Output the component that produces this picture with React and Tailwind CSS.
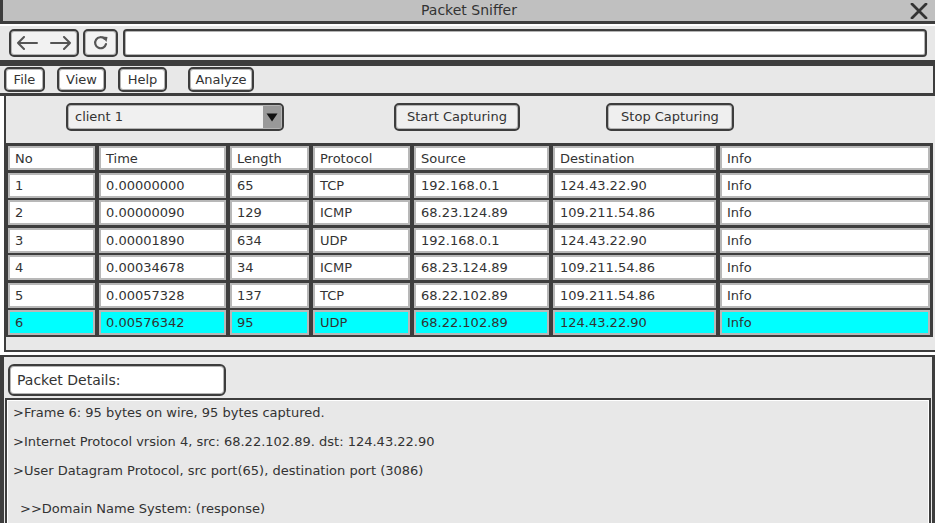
import React from "react";

const cols = [87, 127, 79, 97, 135, 163, 210];
const header = ["No", "Time", "Length", "Protocol", "Source", "Destination", "Info"];
const rows = [
  ["1", "0.00000000", "65", "TCP", "192.168.0.1", "124.43.22.90", "Info"],
  ["2", "0.00000090", "129", "ICMP", "68.23.124.89", "109.211.54.86", "Info"],
  ["3", "0.00001890", "634", "UDP", "192.168.0.1", "124.43.22.90", "Info"],
  ["4", "0.00034678", "34", "ICMP", "68.23.124.89", "109.211.54.86", "Info"],
  ["5", "0.00057328", "137", "TCP", "68.22.102.89", "109.211.54.86", "Info"],
  ["6", "0.00576342", "95", "UDP", "68.22.102.89", "124.43.22.90", "Info"],
];

function Btn({ className = "", children }) {
  return (
    <div
      className={
        "flex items-center justify-center rounded-[5px] border-2 border-[#3d3d3d] shadow-[inset_0_0_0_1px_#b4b4b4] " +
        className
      }
    >
      {children}
    </div>
  );
}

function Row({ cells, hl, h }) {
  return (
    <div className="flex gap-[4px]">
      {cells.map((c, i) => (
        <div
          key={i}
          style={{ width: cols[i] }}
          className={
            "flex shrink-0 items-center border-2 border-[#b8b8b8] px-[5px] text-[13px] leading-none " +
            (hl ? "bg-[#00ffff] " : "bg-white ") +
            (h ? "h-[24px]" : "h-[25px]")
          }
        >
          {c}
        </div>
      ))}
    </div>
  );
}

export default function App() {
  return (
    <div
      className="relative h-[523px] w-[935px] overflow-hidden bg-white text-[#333]"
      style={{ fontFamily: '"DejaVu Sans", "Noto Sans", sans-serif' }}
    >
      {/* Title bar */}
      <div className="relative flex h-[21px] items-center justify-center border-l-[3px] border-[#3d3d3d] bg-[#c0c0c0] text-[14px]">
        <span>Packet Sniffer</span>
        <svg className="absolute right-[7px] top-[3px]" width="18" height="16" viewBox="0 0 18 16">
          <path d="M2 1 L16 15 M16 1 L2 15" stroke="#333" strokeWidth="2.8" strokeLinecap="round" />
        </svg>
      </div>
      <div className="h-[3px] bg-[#3d3d3d]" />

      {/* Toolbar */}
      <div className="flex h-[36px] items-start gap-[4px] border-t-2 border-white bg-[#e8e8e8] pl-[9px] pr-[8px] pt-[3px]">
        <Btn className="h-[28px] w-[70px] gap-[12px] bg-[#f2f2f2]">
          <svg width="22" height="14" viewBox="0 0 22 14">
            <path d="M21 7 H2 M8 1 L2 7 L8 13" fill="none" stroke="#555" strokeWidth="2" strokeLinecap="round" strokeLinejoin="round" />
          </svg>
          <svg width="22" height="14" viewBox="0 0 22 14">
            <path d="M1 7 H20 M14 1 L20 7 L14 13" fill="none" stroke="#555" strokeWidth="2" strokeLinecap="round" strokeLinejoin="round" />
          </svg>
        </Btn>
        <Btn className="h-[28px] w-[35px] bg-[#f2f2f2]">
          <svg width="16" height="16" viewBox="0 0 16 16">
            <path d="M13 9 A5.5 5.5 0 1 1 11.5 3.8" fill="none" stroke="#555" strokeWidth="2.2" strokeLinecap="round" />
            <path d="M9 1.5 L14.5 2 L13.5 7 Z" fill="#555" />
          </svg>
        </Btn>
        <div className="ml-[1px] h-[28px] flex-1 rounded-[4px] border-2 border-[#3d3d3d] bg-white shadow-[inset_0_0_0_1px_#b4b4b4]" />
      </div>
      <div className="h-[6px] bg-[#3d3d3d]" />

      {/* Menu bar */}
      <div className="flex h-[27px] items-start border-r-2 border-[#3d3d3d] bg-[#e8e8e8] pl-[4px] pt-[1px] text-[13px]">
        <Btn className="h-[25px] w-[41px] bg-white">File</Btn>
        <Btn className="ml-[12px] h-[25px] w-[49px] bg-white">View</Btn>
        <Btn className="ml-[12px] h-[25px] w-[49px] bg-white">Help</Btn>
        <Btn className="ml-[21px] h-[25px] w-[66px] bg-white">Analyze</Btn>
      </div>
      <div className="h-[3px] bg-[#3d3d3d]" />

      {/* Main panel */}
      <div className="ml-[4px] border-l-2 border-[#3d3d3d] bg-[#e8e8e8]">
        <div className="flex h-[47px] items-start pt-[7px] text-[13px]">
          <div className="ml-[60px] flex h-[28px] w-[218px] items-center rounded-[5px] border-2 border-[#3d3d3d] bg-[#f0f0f0] pl-[7px] pr-[1px] shadow-[inset_0_0_0_1px_#b4b4b4]">
            <span className="flex-1">client 1</span>
            <div className="flex h-[22px] w-[18px] items-center justify-center bg-[#999]">
              <svg width="12" height="9" viewBox="0 0 12 9">
                <path d="M0.5 0.5 H11.5 L6 8.5 Z" fill="#111" />
              </svg>
            </div>
          </div>
          <Btn className="ml-[110px] h-[28px] w-[126px] bg-[#efefef]">Start Capturing</Btn>
          <Btn className="ml-[86px] h-[28px] w-[128px] bg-[#efefef]">Stop Capturing</Btn>
        </div>
        <div className="mr-[2px] flex flex-col gap-[2.5px] bg-[#3d3d3d] pb-[2px] pl-[2px] pt-[3px]">
          <Row cells={header} h />
          {rows.map((r, i) => (
            <Row key={i} cells={r} hl={i === 5} />
          ))}
        </div>
        <div className="h-[15px] border-b-2 border-[#3d3d3d]" />
      </div>
      <div className="h-[3px] bg-white" />
      <div className="h-[2px] bg-[#3d3d3d]" />

      {/* Bottom section */}
      <div className="flex h-[166px] flex-col border-l-4 border-r-[3px] border-[#3d3d3d] bg-[#e8e8e8]">
        <div className="pl-[4px] pt-[7px]">
          <div className="flex h-[32px] w-[218px] items-center rounded-[6px] border-2 border-[#3d3d3d] bg-white pl-[7px] text-[14px] shadow-[inset_0_0_0_1px_#b4b4b4]">
            Packet Details:
          </div>
        </div>
        <div className="ml-[1px] mr-[1px] mt-[2px] flex-1 border-l-2 border-r-2 border-t-2 border-[#3d3d3d] shadow-[inset_1px_1px_0_0_#ffffff,inset_-1px_0_0_0_#ffffff]">
          <div className="flex flex-col pl-[6px] pt-[3px] text-[13px] leading-[20px]">
            <div>&gt;Frame 6: 95 bytes on wire, 95 bytes captured.</div>
            <div className="mt-[9px]">&gt;Internet Protocol vrsion 4, src: 68.22.102.89. dst: 124.43.22.90</div>
            <div className="mt-[9px]">&gt;User Datagram Protocol, src port(65), destination port (3086)</div>
            <div className="mt-[18px] pl-[7px]">&gt;&gt;Domain Name System: (response)</div>
          </div>
        </div>
      </div>
    </div>
  );
}
